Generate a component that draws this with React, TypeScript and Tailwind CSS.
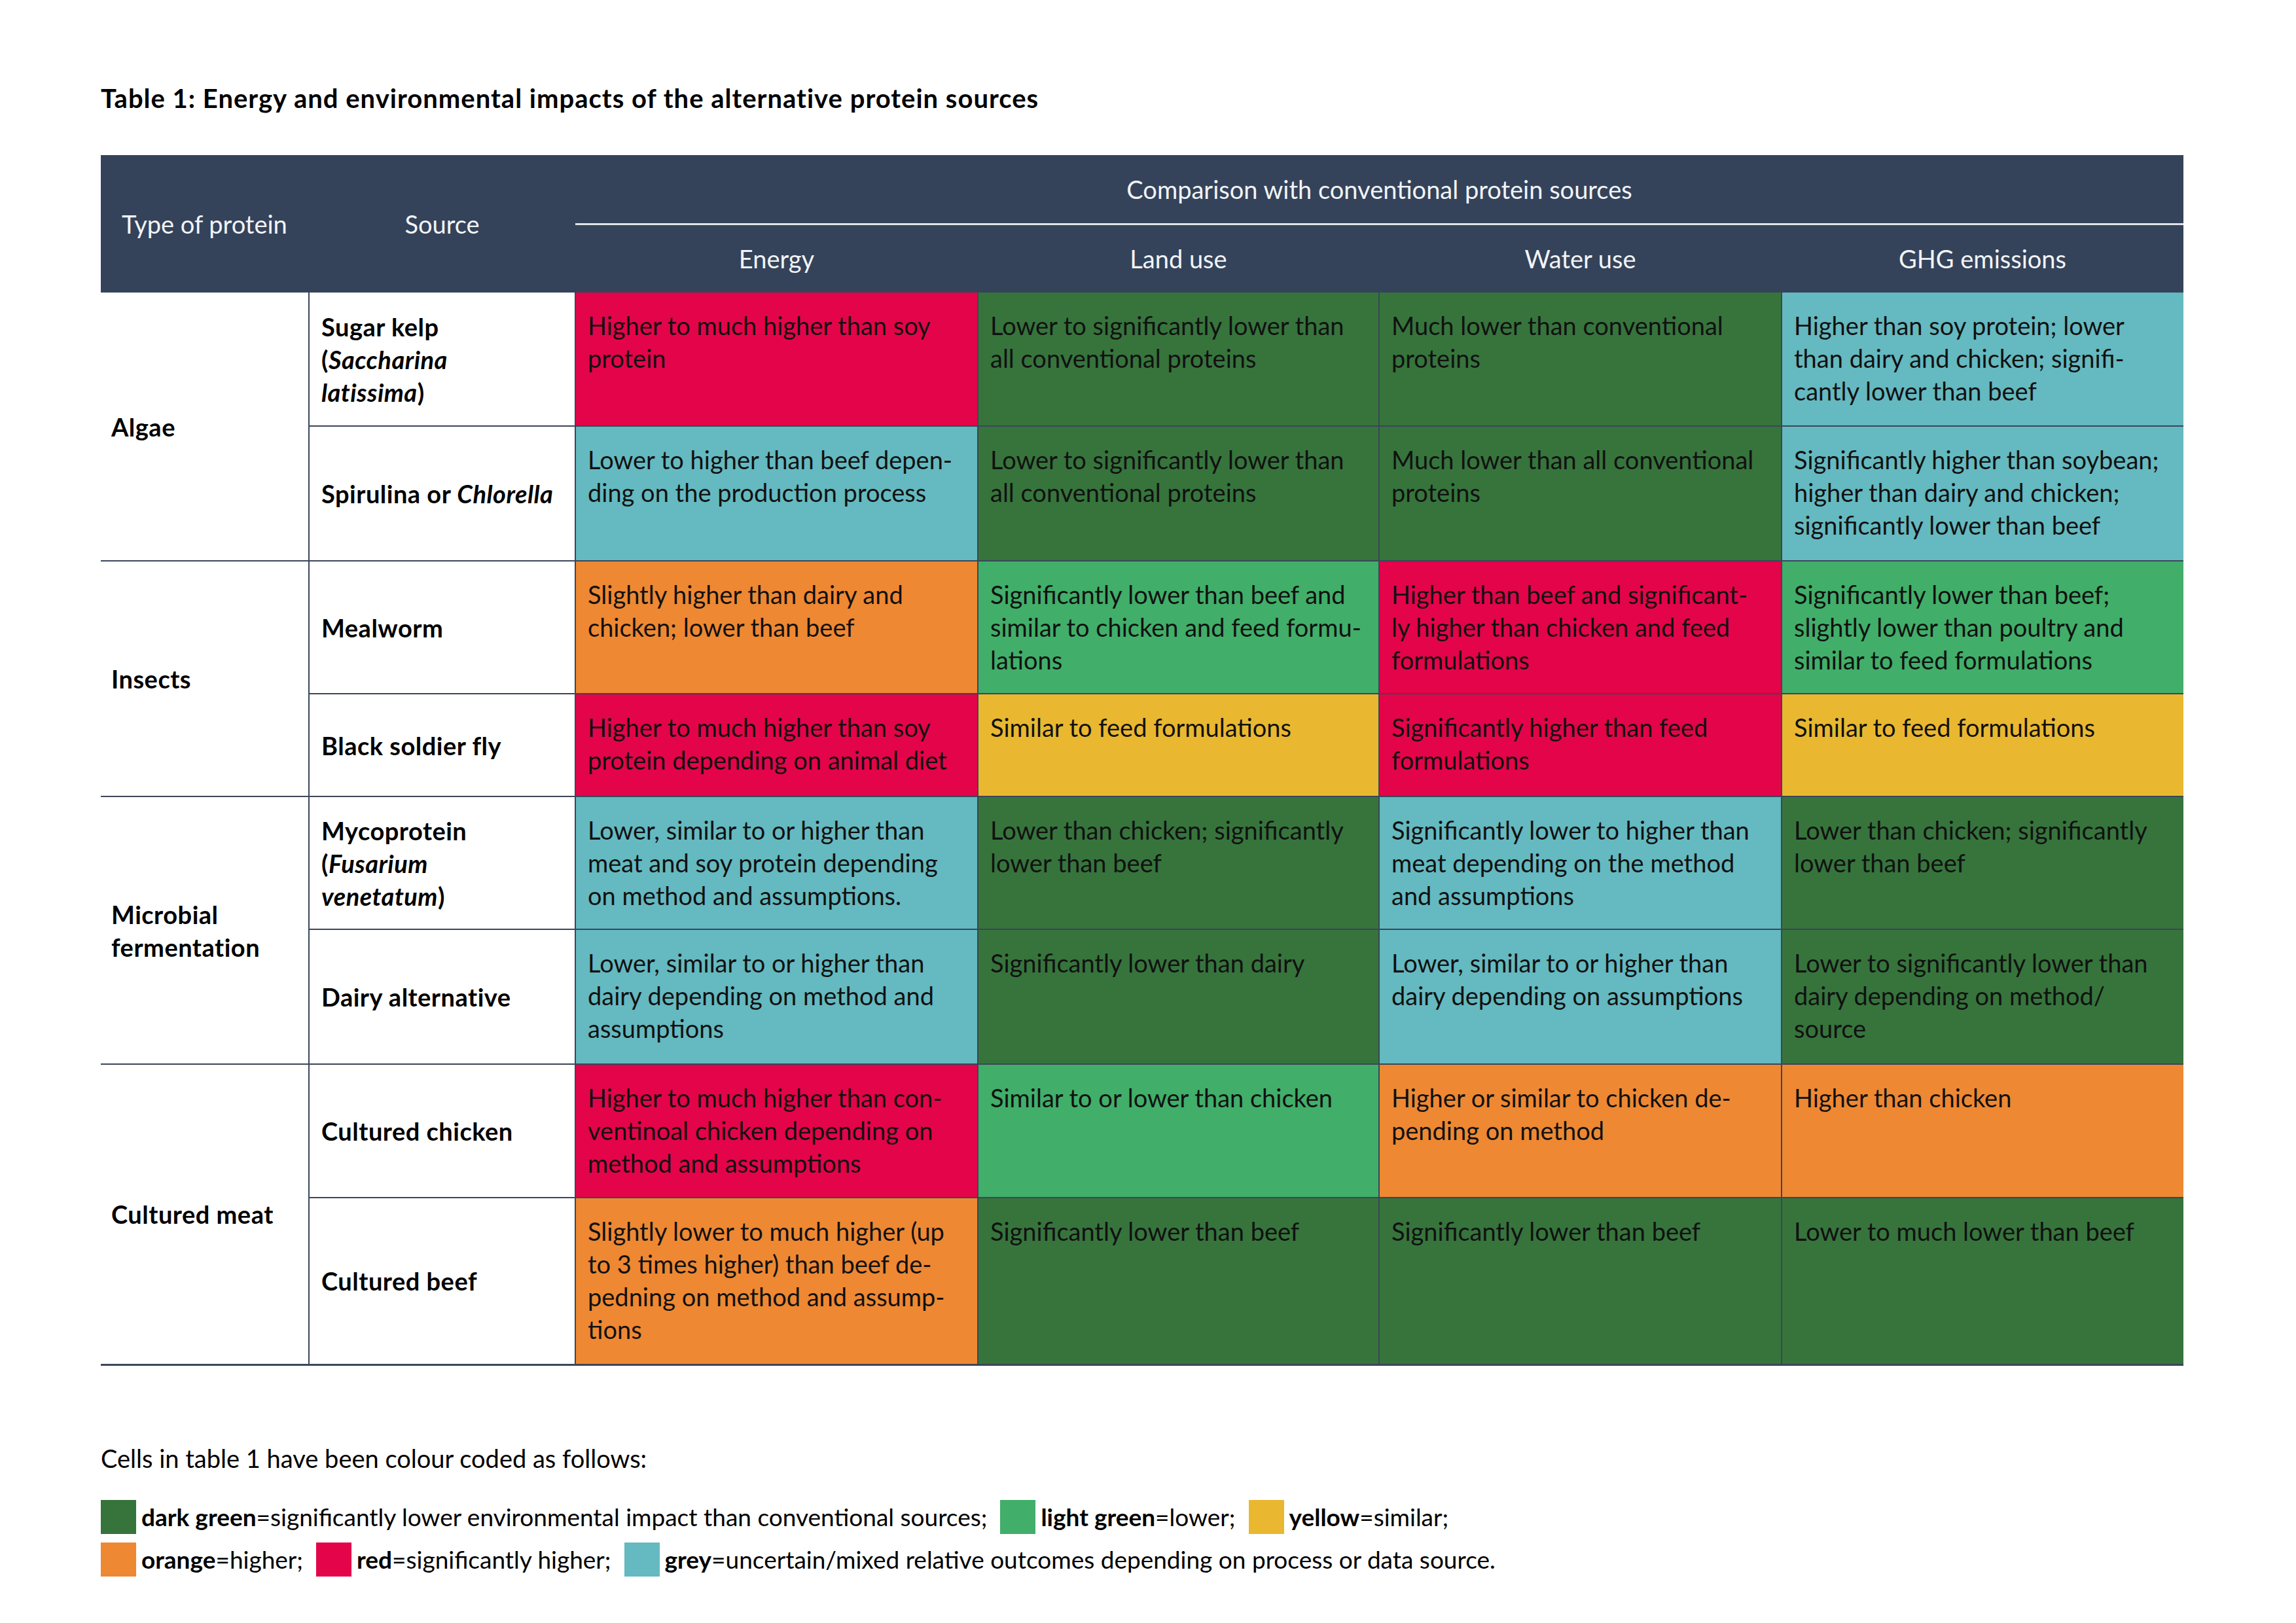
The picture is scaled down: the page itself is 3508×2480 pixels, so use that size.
import React from "react";

type Tone = "dg" | "lg" | "ye" | "or" | "rd" | "gr";

const toneClass: Record<Tone, string> = {
  dg: "bg-[#36743c]",
  lg: "bg-[#41ae69]",
  ye: "bg-[#e9b830]",
  or: "bg-[#ee8833]",
  rd: "bg-[#e3044a]",
  gr: "bg-[#65b9c0]",
};

interface Cell {
  tone: Tone;
  lines: string[];
}

interface Row {
  group?: { label: React.ReactNode; span: number };
  source: React.ReactNode;
  height: string;
  cells: Cell[];
}

const rows: Row[] = [
  {
    group: { label: "Algae", span: 2 },
    source: (
      <>
        Sugar kelp
        <br />(<i>Saccharina</i>
        <br />
        <i>latissima</i>)
      </>
    ),
    height: "h-[204px]",
    cells: [
      { tone: "rd", lines: ["Higher to much higher than soy", "protein"] },
      { tone: "dg", lines: ["Lower to significantly lower than", "all conventional proteins"] },
      { tone: "dg", lines: ["Much lower than conventional", "proteins"] },
      {
        tone: "gr",
        lines: ["Higher than soy protein; lower", "than dairy and chicken; signifi-", "cantly lower than beef"],
      },
    ],
  },
  {
    source: (
      <>
        Spirulina or <i>Chlorella</i>
      </>
    ),
    height: "h-[206px]",
    cells: [
      { tone: "gr", lines: ["Lower to higher than beef depen-", "ding on the production process"] },
      { tone: "dg", lines: ["Lower to significantly lower than", "all conventional proteins"] },
      { tone: "dg", lines: ["Much lower than all conventional", "proteins"] },
      {
        tone: "gr",
        lines: ["Significantly higher than soybean;", "higher than dairy and chicken;", "significantly lower than beef"],
      },
    ],
  },
  {
    group: { label: "Insects", span: 2 },
    source: "Mealworm",
    height: "h-[203px]",
    cells: [
      { tone: "or", lines: ["Slightly higher than dairy and", "chicken; lower than beef"] },
      {
        tone: "lg",
        lines: ["Significantly lower than beef and", "similar to chicken and feed formu-", "lations"],
      },
      {
        tone: "rd",
        lines: ["Higher than beef and significant-", "ly higher than chicken and feed", "formulations"],
      },
      {
        tone: "lg",
        lines: ["Significantly lower than beef;", "slightly lower than poultry and", "similar to feed formulations"],
      },
    ],
  },
  {
    source: "Black soldier fly",
    height: "h-[157px]",
    cells: [
      { tone: "rd", lines: ["Higher to much higher than soy", "protein depending on animal diet"] },
      { tone: "ye", lines: ["Similar to feed formulations"] },
      { tone: "rd", lines: ["Significantly higher than feed", "formulations"] },
      { tone: "ye", lines: ["Similar to feed formulations"] },
    ],
  },
  {
    group: {
      label: (
        <>
          Microbial
          <br />
          fermentation
        </>
      ),
      span: 2,
    },
    source: (
      <>
        Mycoprotein
        <br />(<i>Fusarium</i>
        <br />
        <i>venetatum</i>)
      </>
    ),
    height: "h-[203px]",
    cells: [
      {
        tone: "gr",
        lines: ["Lower, similar to or higher than", "meat and soy protein depending", "on method and assumptions."],
      },
      { tone: "dg", lines: ["Lower than chicken; significantly", "lower than beef"] },
      {
        tone: "gr",
        lines: ["Significantly lower to higher than", "meat depending on the method", "and assumptions"],
      },
      { tone: "dg", lines: ["Lower than chicken; significantly", "lower than beef"] },
    ],
  },
  {
    source: "Dairy alternative",
    height: "h-[206px]",
    cells: [
      {
        tone: "gr",
        lines: ["Lower, similar to or higher than", "dairy depending on method and", "assumptions"],
      },
      { tone: "dg", lines: ["Significantly lower than dairy"] },
      { tone: "gr", lines: ["Lower, similar to or higher than", "dairy depending on assumptions"] },
      {
        tone: "dg",
        lines: ["Lower to significantly lower than", "dairy depending on method/", "source"],
      },
    ],
  },
  {
    group: { label: "Cultured meat", span: 2 },
    source: "Cultured chicken",
    height: "h-[204px]",
    cells: [
      {
        tone: "rd",
        lines: ["Higher to much higher than con-", "ventinoal chicken depending on", "method and assumptions"],
      },
      { tone: "lg", lines: ["Similar to or lower than chicken"] },
      { tone: "or", lines: ["Higher or similar to chicken de-", "pending on method"] },
      { tone: "or", lines: ["Higher than chicken"] },
    ],
  },
  {
    source: "Cultured beef",
    height: "h-[255px]",
    cells: [
      {
        tone: "or",
        lines: [
          "Slightly lower to much higher (up",
          "to 3 times higher) than beef de-",
          "pedning on method and assump-",
          "tions",
        ],
      },
      { tone: "dg", lines: ["Significantly lower than beef"] },
      { tone: "dg", lines: ["Significantly lower than beef"] },
      { tone: "dg", lines: ["Lower to much lower than beef"] },
    ],
  },
];

const legendRows: { tone: Tone; name: string; text: string }[][] = [
  [
    { tone: "dg", name: "dark green", text: "=significantly lower environmental impact than conventional sources;" },
    { tone: "lg", name: "light green", text: "=lower;" },
    { tone: "ye", name: "yellow", text: "=similar;" },
  ],
  [
    { tone: "or", name: "orange", text: "=higher;" },
    { tone: "rd", name: "red", text: "=significantly higher;" },
    { tone: "gr", name: "grey", text: "=uncertain/mixed relative outcomes depending on process or data source." },
  ],
];

export default function App() {
  return (
    <div className="w-[3508px] h-[2480px] bg-white pl-[154px] pt-[125px] font-['Lato',sans-serif] text-[38px] leading-[50px] text-[#111]">
      <h1 className="font-bold text-[40px] leading-[50px] tracking-[1px] text-black">
        Table 1: Energy and environmental impacts of the alternative protein sources
      </h1>

      <table className="mt-[62px] w-[3182px] table-fixed border-collapse border-b-[3px] border-[#3b4659]">
        <colgroup>
          <col className="w-[318px]" />
          <col className="w-[407px]" />
          <col className="w-[615px]" />
          <col className="w-[613px]" />
          <col className="w-[615px]" />
          <col className="w-[614px]" />
        </colgroup>
        <thead className="bg-[#34435a] text-[#f2f4f7] font-normal">
          <tr className="h-[105px]">
            <th rowSpan={2} className="pl-[32px] text-left font-normal">
              Type of protein
            </th>
            <th rowSpan={2} className="text-center font-normal">
              Source
            </th>
            <th colSpan={4} className="text-center font-normal border-b-[3px] border-[#dfe3e8]">
              Comparison with conventional protein sources
            </th>
          </tr>
          <tr className="h-[105px]">
            <th className="text-center font-normal">Energy</th>
            <th className="text-center font-normal">Land use</th>
            <th className="text-center font-normal">Water use</th>
            <th className="text-center font-normal">GHG emissions</th>
          </tr>
        </thead>
        <tbody>
          {rows.map((row, i) => (
            <tr key={i} className={row.height}>
              {row.group && (
                <td
                  rowSpan={row.group.span}
                  className="pl-[16px] align-middle font-bold tracking-[0.5px] text-black border-b-2 border-[#3b4659]"
                >
                  {row.group.label}
                </td>
              )}
              <td className="pl-[18px] align-middle font-bold tracking-[0.5px] text-black bg-white border-l-2 border-b-2 border-[#3b4659]">
                {row.source}
              </td>
              {row.cells.map((c, j) => (
                <td
                  key={j}
                  className={`${toneClass[c.tone]} align-top pl-[18px] pt-[25px] whitespace-nowrap border-l-2 border-b-2 border-[#3b4659]`}
                >
                  {c.lines.map((l, k) => (
                    <div key={k}>{l}</div>
                  ))}
                </td>
              ))}
            </tr>
          ))}
        </tbody>
      </table>

      <p className="mt-[116px] text-black">Cells in table 1 have been colour coded as follows:</p>

      <div className="mt-[39px] flex flex-col gap-[13px] text-[37px] text-black">
        {legendRows.map((items, i) => (
          <div key={i} className="flex items-center gap-[20px]">
            {items.map((it) => (
              <div key={it.name} className="flex items-center">
                <span className={`${toneClass[it.tone]} w-[54px] h-[52px] mr-[8px]`} />
                <span>
                  <b>{it.name}</b>
                  {it.text}
                </span>
              </div>
            ))}
          </div>
        ))}
      </div>
    </div>
  );
}
